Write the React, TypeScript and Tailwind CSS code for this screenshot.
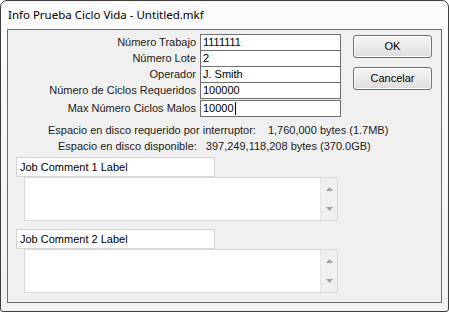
import React from "react";

const fields = [
  { label: "Número Trabajo", value: "1111111" },
  { label: "Número Lote", value: "2" },
  { label: "Operador", value: "J. Smith" },
  { label: "Número de Ciclos Requeridos", value: "100000" },
];

function Field({ label, value, className = "", caret = false }: { label: string; value: string; className?: string; caret?: boolean }) {
  return (
    <div className={`flex items-center h-[17px] ${className}`}>
      <div className="w-[192px] pr-[4px] text-right text-[11px] leading-[17px] text-[#1a1a1a]">{label}</div>
      <div className="w-[141px] h-[17px] border border-[#6f6f6f] bg-white pl-[2px] text-[11px] leading-[15px] text-black flex items-center">
        {value}
        {caret && <span className="w-px h-[13px] bg-black ml-px" />}
      </div>
    </div>
  );
}

function Btn({ children }: { children: React.ReactNode }) {
  return (
    <div className="w-[79px] h-[23px] rounded-[3px] border border-[#707070] bg-gradient-to-b from-[#f4f4f4] via-[#ebebeb] to-[#dcdcdc] flex items-center justify-center text-[11px] text-black shadow-[inset_0_0_0_1px_#fcfcfc]">
      {children}
    </div>
  );
}

function Comment({ label }: { label: string }) {
  return (
    <div className="flex flex-col">
      <div className="ml-[8px] w-[199px] h-[20px] border border-[#d4d4d4] bg-white pl-[3px] text-[11px] leading-[18px] text-black">
        {label}
      </div>
      <div className="ml-[16px] w-[314px] h-[44px] border border-[#d8d8e0] bg-white flex justify-end">
        <div className="w-[17px] h-full bg-[#f0f0f0] border-l border-[#e6e6e6] flex flex-col items-center justify-between py-[9px]">
          <svg width="7" height="4" viewBox="0 0 7 4"><path d="M3.5 0 L7 4 L0 4 Z" fill="#a0a0a0" /></svg>
          <svg width="7" height="4" viewBox="0 0 7 4"><path d="M0 0 L7 0 L3.5 4 Z" fill="#a0a0a0" /></svg>
        </div>
      </div>
    </div>
  );
}

export default function App() {
  return (
    <div className="w-[449px] h-[312px] bg-white" style={{ fontFamily: '"Liberation Sans", Arial, sans-serif' }}>
      <div className="w-[449px] h-[312px] rounded-t-[7px] rounded-b-[3px] border border-[#3c3c3c] bg-gradient-to-b from-[#fbfbfb] to-[#f1f1f1] flex flex-col">
        <div className="h-[28px] pl-[7px] flex items-center text-[11.5px] text-black" style={{ fontFamily: '"Noto Sans", sans-serif' }}>
          Info Prueba Ciclo Vida - Untitled.mkf
        </div>
        <div className="ml-[6px] w-[435px] h-[274px] border border-[#6a6a6a] bg-[#f0f0f0] flex flex-col">
          <div className="flex pt-[4px]">
            <div className="flex flex-col">
              {fields.map((f, i) => (
                <Field key={f.label} label={f.label} value={f.value} className={i === 0 ? "" : "-mt-px"} />
              ))}
              <Field label="Max Número Ciclos Malos" value="10000" className="mt-px" caret />
            </div>
            <div className="ml-[12px] pt-[1px] flex flex-col gap-[9px]">
              <Btn>OK</Btn>
              <Btn>Cancelar</Btn>
            </div>
          </div>
          <div className="mt-[5px] text-[11px] leading-[16px] text-[#1a1a1a]">
            <div className="pl-[40px] flex">
              <span>Espacio en disco requerido por interruptor:</span>
              <span className="ml-[12px]">1,760,000 bytes (1.7MB)</span>
            </div>
            <div className="pl-[50px] flex">
              <span>Espacio en disco disponible:</span>
              <span className="ml-[9px]">397,249,118,208 bytes (370.0GB)</span>
            </div>
          </div>
          <div className="mt-[3px] flex flex-col gap-[8px]">
            <Comment label="Job Comment 1 Label" />
            <Comment label="Job Comment 2 Label" />
          </div>
        </div>
      </div>
    </div>
  );
}
